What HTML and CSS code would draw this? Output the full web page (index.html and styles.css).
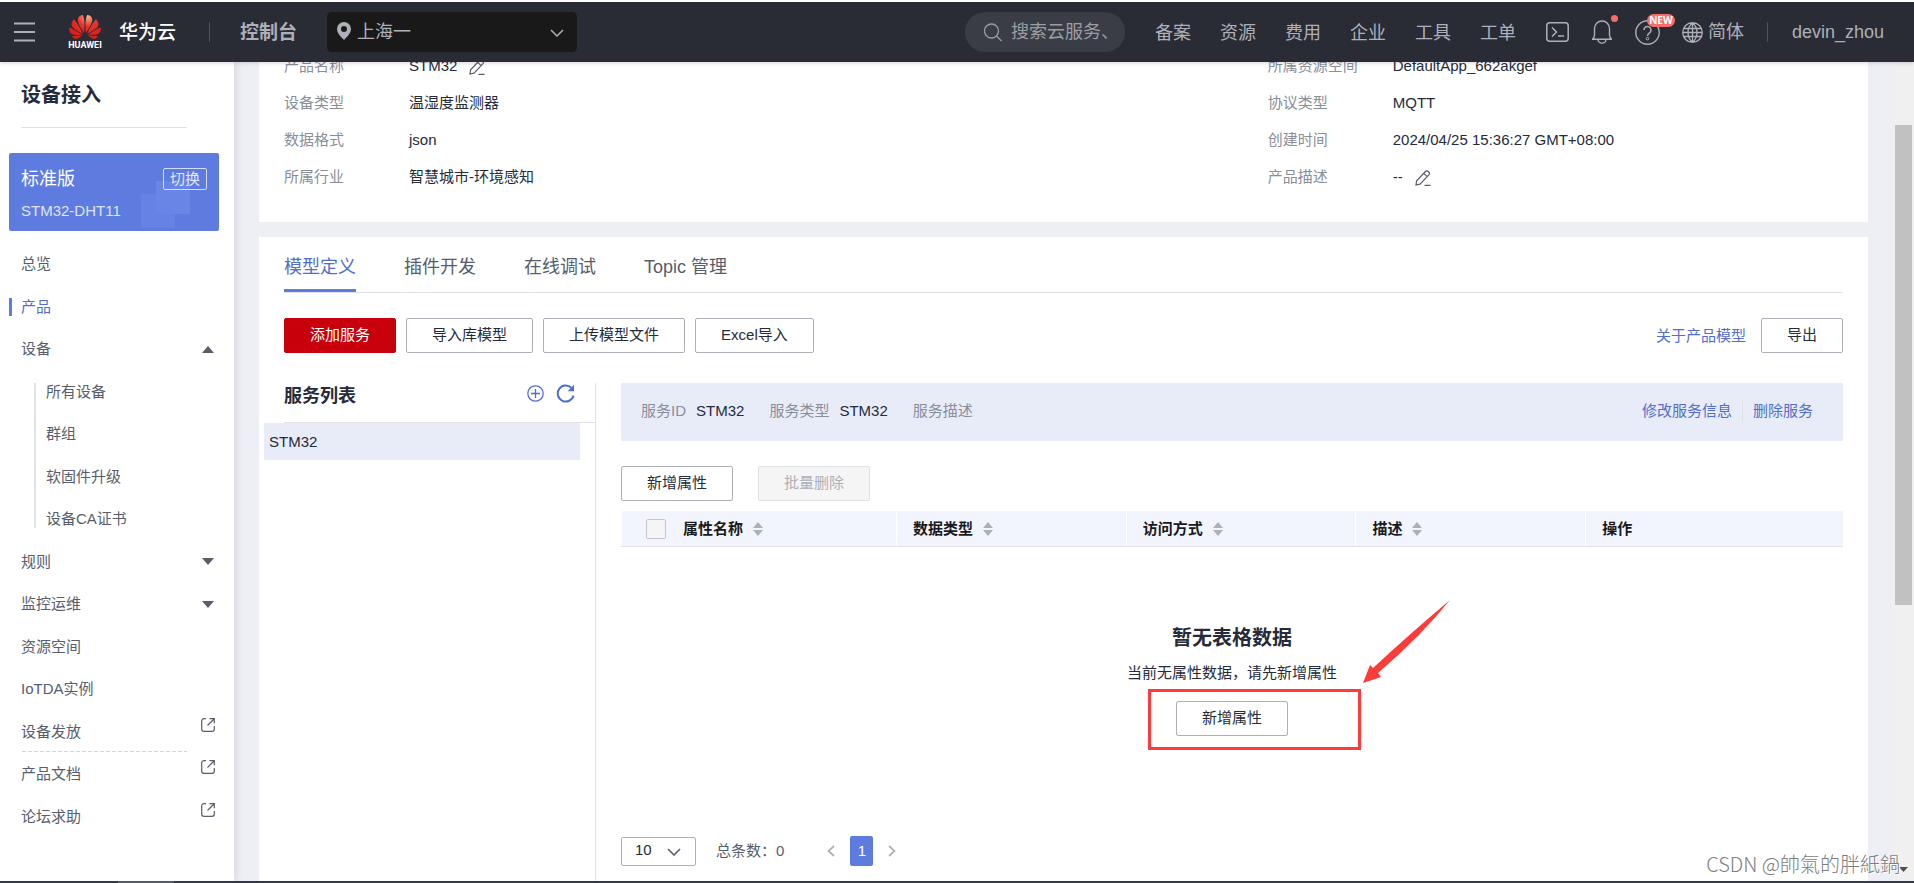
FILE: index.html
```
<!DOCTYPE html>
<html lang="zh-CN">
<head>
<meta charset="utf-8">
<title>设备接入 - 华为云</title>
<link rel="stylesheet" href="styles.css">
</head>
<body>
<svg class="defs" aria-hidden="true">
  <symbol id="pencil" viewBox="0 0 18 18"><path d="M2 16l.6-4.2L11.4 2.5a2 2 0 0 1 2.9 0l.5.5a2 2 0 0 1 0 2.9L6 15.2 2 16zM9.8 4.4l3.3 3.2M10.5 16.3h6" fill="none" stroke="currentColor" stroke-width="1.2"/></symbol>
  <symbol id="ext" viewBox="0 0 14 14"><path d="M5 .7H3A2.3 2.3 0 0 0 .7 3v8A2.3 2.3 0 0 0 3 13.3h8a2.3 2.3 0 0 0 2.3-2.3V8M8.5.7h4.8v4.6M13 1L6.5 7.5" fill="none" stroke="currentColor" stroke-width="1.2"/></symbol>
  <symbol id="sort" viewBox="0 0 10 14"><path d="M5 0l5 6H0zM5 14L0 8h10z" fill="currentColor"/></symbol>
  <symbol id="up" viewBox="0 0 12 7"><path d="M6 0l6 7H0z" fill="currentColor"/></symbol>
  <symbol id="down" viewBox="0 0 12 7"><path d="M6 7L0 0h12z" fill="currentColor"/></symbol>
</svg>

<header class="topbar">
  <button class="icon-btn burger" aria-label="菜单"><svg width="21" height="20" viewBox="0 0 21 20"><path d="M0 1.5h21M0 10h21M0 18.500h21" stroke="currentColor" stroke-width="2"/></svg></button>
  <a class="brand" href="#">
    <span class="brand-mark">
      <svg width="32" height="24" viewBox="0 2.9 24 18.200"><defs><radialGradient id="petal" gradientUnits="userSpaceOnUse" cx="14" cy="4" r="15"><stop offset="0" stop-color="#f9b392"/><stop offset=".5" stop-color="#e8352a"/><stop offset="1" stop-color="#d9201c"/></radialGradient></defs><path fill="url(#petal)" d="M3.67 6.14S1.82 7.91 1.72 9.78v.35c.08 1.51 1.22 2.4 1.22 2.4 1.83 1.79 6.26 4.04 7.3 4.55 0 0 .06.03.1-.01l.02-.04v-.04C7.52 10.8 3.67 6.14 3.67 6.14zM9.65 18.6c-.02-.08-.1-.08-.1-.08l-7.38.26c.8 1.43 2.15 2.53 3.56 2.2.96-.25 3.16-1.78 3.88-2.3.06-.05.04-.09.04-.09zm.08-.78C6.49 15.63.21 12.28.21 12.28c-.15.46-.2.9-.21 1.3v.07c0 1.07.4 1.82.4 1.82.8 1.69 2.34 2.2 2.34 2.2.7.3 1.4.31 1.4.31.12.02 4.4 0 5.54 0 .05 0 .08-.05.08-.05v-.06c0-.03-.03-.05-.03-.05zM9.06 3.19a3.42 3.42 0 00-2.57 3.15v.41c.03.6.16 1.05.16 1.05.66 2.9 3.86 7.65 4.55 8.65.05.05.1.03.1.03a.1.1 0 00.06-.1c1.06-10.6-1.11-13.42-1.11-13.42-.32.02-1.19.23-1.19.23zm8.299 2.27s-.49-1.8-2.44-2.28c0 0-.57-.14-1.17-.22 0 0-2.18 2.81-1.12 13.43.01.07.06.08.06.08.07.03.1-.03.1-.03.72-1.03 3.9-5.76 4.55-8.64 0 0 .36-1.4.02-2.34zm-2.92 13.07s-.07 0-.09.05c0 0-.01.07.03.1.7.51 2.85 2 3.88 2.3 0 0 .16.05.43.06h.14c.69-.02 1.9-.37 3-2.26l-7.4-.25zm7.83-8.41c.14-2.06-1.94-3.97-1.94-3.98 0 0-3.85 4.66-6.67 10.8 0 0-.03.08.02.13l.04.01h.06c1.06-.53 5.46-2.77 7.28-4.54 0 0 1.15-.93 1.21-2.42zm1.52 2.14s-6.28 3.37-9.52 5.55c0 0-.05.04-.03.11 0 0 .03.06.07.06 1.16 0 5.56 0 5.67-.02 0 0 .57-.02 1.27-.29 0 0 1.56-.5 2.37-2.27 0 0 .73-1.45.17-3.14z"/></svg>
      <span class="brand-en">HUAWEI</span>
    </span>
    <span class="brand-name">华为云</span>
  </a>
  <span class="bar-line"></span>
  <a class="console-link" href="#">控制台</a>
  <div class="region">
    <svg class="region-pin" width="14" height="18" viewBox="0 0 14 18"><path fill="currentColor" fill-rule="evenodd" d="M7 0a7 7 0 0 1 7 7c0 4-4 8-7 11-3-3-7-7-7-11a7 7 0 0 1 7-7zm0 4a3 3 0 1 0 0 6 3 3 0 0 0 0-6z"/></svg>
    <select class="region-select" aria-label="区域"><option>上海一</option></select>
    <svg class="region-arrow" width="14" height="8" viewBox="0 0 14 8"><path d="M1 1l6 6 6-6" fill="none" stroke="currentColor" stroke-width="1.500"/></svg>
  </div>
  <label class="search">
    <svg width="18" height="19" viewBox="0 0 18 19"><circle cx="7.500" cy="8" r="7" fill="none" stroke="currentColor" stroke-width="1.300"/><path d="M12.500 13l5 5" stroke="currentColor" stroke-width="1.300"/></svg>
    <input type="text" class="search-input" placeholder="搜索云服务、" aria-label="搜索">
  </label>
  <nav class="topnav">
    <a href="#">备案</a><a href="#">资源</a><a href="#">费用</a><a href="#">企业</a><a href="#">工具</a><a href="#">工单</a>
  </nav>
  <div class="tools">
    <button class="icon-btn" aria-label="命令行"><svg width="23" height="20" viewBox="0 0 23 20"><rect x=".8" y=".8" width="21.400" height="18.400" rx="3" fill="none" stroke="currentColor" stroke-width="1.500"/><path d="M6 5.500l4.500 4.500L6 14.500M12 14h6" fill="none" stroke="currentColor" stroke-width="1.500"/></svg></button>
    <button class="icon-btn" aria-label="消息"><svg width="22" height="24" viewBox="0 0 22 24"><path d="M1 19.200h20M1.500 19q2-1.500 2-4V8.500a7.500 7.500 0 0 1 15 0V15q0 2.500 2 4M7 19.500a4 3.600 0 0 0 8 0" fill="none" stroke="currentColor" stroke-width="1.400"/></svg><span class="dot"></span></button>
    <button class="icon-btn" aria-label="帮助"><svg width="25" height="25" viewBox="0 0 25 25"><circle cx="12.500" cy="12.500" r="11.700" fill="none" stroke="currentColor" stroke-width="1.400"/><path d="M9 10a3.500 3.500 0 1 1 5.500 2.800c-1.300.9-2 1.500-2 3.200" fill="none" stroke="currentColor" stroke-width="1.500"/><circle cx="12.500" cy="18.600" r="1.300" fill="none" stroke="currentColor"/></svg><span class="new">NEW</span></button>
    <button class="icon-btn lang"><svg width="21" height="21" viewBox="0 0 21 21"><path d="M10.500.7a9.800 9.800 0 1 0 0 19.600 9.800 9.800 0 0 0 0-19.600zc-6 5-6 14.600 0 19.600 6-5 6-14.600 0-19.600zv19.600M2 6.500h17M2 14.500h17M.7 10.500h19.600" fill="none" stroke="currentColor" stroke-width="1.300"/></svg>简体</button>
  </div>
  <span class="bar-line"></span>
  <a class="user" href="#">devin_zhou</a>
</header>

<div class="shell">
  <aside class="sidebar">
    <h1 class="side-title">设备接入</h1>
    <div class="edition">
      <div class="edition-row"><span class="edition-name">标准版</span><button class="switch">切换</button></div>
      <span class="edition-id">STM32-DHT11</span>
    </div>
    <ul class="menu">
      <li><a href="#">总览</a></li>
      <li class="active"><a href="#">产品</a></li>
      <li><a href="#">设备<svg width="12" height="7"><use href="#up"/></svg></a></li>
      <li class="sub"><ul>
        <li><a href="#">所有设备</a></li><li><a href="#">群组</a></li><li><a href="#">软固件升级</a></li><li><a href="#">设备CA证书</a></li>
      </ul></li>
      <li><a href="#">规则<svg width="12" height="7"><use href="#down"/></svg></a></li>
      <li><a href="#">监控运维<svg width="12" height="7"><use href="#down"/></svg></a></li>
      <li><a href="#">资源空间</a></li>
      <li><a href="#">IoTDA实例</a></li>
      <li class="outer dashed"><a href="#">设备发放<svg width="14" height="14"><use href="#ext"/></svg></a></li>
      <li class="outer"><a href="#">产品文档<svg width="14" height="14"><use href="#ext"/></svg></a></li>
      <li class="outer"><a href="#">论坛求助<svg width="14" height="14"><use href="#ext"/></svg></a></li>
    </ul>
  </aside>

  <main class="content">
    <section class="card info">
      <dl>
        <div><dt>产品名称</dt><dd>STM32<button class="edit" aria-label="编辑"><svg width="18" height="18"><use href="#pencil"/></svg></button></dd></div>
        <div><dt>所属资源空间</dt><dd>DefaultApp_662akgef</dd></div>
        <div><dt>设备类型</dt><dd>温湿度监测器</dd></div>
        <div><dt>协议类型</dt><dd>MQTT</dd></div>
        <div><dt>数据格式</dt><dd>json</dd></div>
        <div><dt>创建时间</dt><dd>2024/04/25 15:36:27 GMT+08:00</dd></div>
        <div><dt>所属行业</dt><dd>智慧城市-环境感知</dd></div>
        <div><dt>产品描述</dt><dd>--<button class="edit" aria-label="编辑"><svg width="18" height="18"><use href="#pencil"/></svg></button></dd></div>
      </dl>
    </section>

    <section class="card model">
      <nav class="tabs"><a class="on" href="#">模型定义</a><a href="#">插件开发</a><a href="#">在线调试</a><a href="#">Topic 管理</a></nav>
      <div class="toolbar">
        <button class="btn primary">添加服务</button><button class="btn">导入库模型</button><button class="btn">上传模型文件</button><button class="btn">Excel导入</button>
        <a class="link about" href="#">关于产品模型</a><button class="btn">导出</button>
      </div>
      <div class="split">
        <div class="services">
          <div class="services-head">
            <h2>服务列表</h2>
            <button class="icon-btn" aria-label="新增"><svg width="17" height="17" viewBox="0 0 17 17"><path d="M8.500 4v9M4 8.500h9" stroke="currentColor" stroke-width="1.300"/><circle cx="8.500" cy="8.500" r="7.700" fill="none" stroke="currentColor" stroke-width="1.300"/></svg></button>
            <button class="icon-btn" aria-label="刷新"><svg width="19" height="19" viewBox="0 0 19 19"><path d="M17.500 11.500A8 8 0 1 1 15.500 4" fill="none" stroke="currentColor" stroke-width="2"/><path d="M18 .8v6.400h-6.400z" fill="currentColor"/></svg></button>
          </div>
          <a class="service" href="#">STM32</a>
        </div>
        <div class="detail">
          <div class="summary">
            <span class="muted">服务ID</span><span class="val">STM32</span>
            <span class="muted">服务类型</span><span class="val">STM32</span>
            <span class="muted">服务描述</span>
            <div class="summary-links"><a class="link" href="#">修改服务信息</a><a class="link" href="#">删除服务</a></div>
          </div>
          <div class="actions"><button class="btn">新增属性</button><button class="btn" disabled>批量删除</button></div>
          <table class="grid">
            <thead><tr>
              <th class="c-name"><div><input type="checkbox" class="check" aria-label="全选">属性名称<svg width="10" height="14"><use href="#sort"/></svg></div></th>
              <th class="c-mid"><div>数据类型<svg width="10" height="14"><use href="#sort"/></svg></div></th>
              <th class="c-mid"><div>访问方式<svg width="10" height="14"><use href="#sort"/></svg></div></th>
              <th class="c-mid"><div>描述<svg width="10" height="14"><use href="#sort"/></svg></div></th>
              <th><div>操作</div></th>
            </tr></thead>
            <tbody><tr><td colspan="5">
              <h3>暂无表格数据</h3>
              <p>当前无属性数据，请先新增属性</p>
              <div class="marked">
                <button class="btn">新增属性</button>
                <span class="mark-box"></span>
                <svg class="mark-arrow" width="88" height="84" viewBox="0 0 88 84"><path d="M0 83l7-18 3 3Q50 31 87 0 58 36 15 73l3 4z" fill="#fc3c3b"/></svg>
              </div>
            </td></tr></tbody>
          </table>
          <div class="pager">
            <div class="size"><select aria-label="每页条数"><option>10</option></select><svg width="14" height="8" viewBox="0 0 14 8"><path d="M1 1l6 6 6-6" fill="none" stroke="currentColor" stroke-width="1.600"/></svg></div>
            <span class="total">总条数：0</span>
            <button class="icon-btn arrow" aria-label="上一页"><svg width="8" height="12" viewBox="0 0 8 12"><path d="M7 1L1.500 6 7 11" fill="none" stroke="currentColor" stroke-width="1.700"/></svg></button>
            <button class="page">1</button>
            <button class="icon-btn arrow" aria-label="下一页"><svg width="8" height="12" viewBox="0 0 8 12"><path d="M1 1l5.500 5L1 11" fill="none" stroke="currentColor" stroke-width="1.700"/></svg></button>
          </div>
        </div>
      </div>
    </section>
  </main>
  <div class="scroll"><div class="thumb"></div><svg class="scroll-down" width="9" height="5"><path d="M0 0h9L4.500 5z" fill="#505050"/></svg></div>
</div>
<footer class="edge"><span></span></footer>
<div class="watermark">CSDN @帥氣的胖紙鍋</div>
</body>
</html>
```
FILE: styles.css
```
* { box-sizing: border-box; }
body {
  margin: 0;
  min-height: 100vh;
  display: flex;
  flex-direction: column;
  position: relative;
  border-top: 2px solid #fff;
  background: #eeeff5;
  color: #252b3a;
  font: 15px/22px "Liberation Sans", "Noto Sans CJK SC", sans-serif;
}
a { color: inherit; text-decoration: none; }
button, input, select { font: inherit; color: inherit; }
button { cursor: pointer; }
svg { display: block; flex: none; }
ul, dl, dd, h1, h2, h3, p { margin: 0; padding: 0; list-style: none; }
.defs { position: absolute; width: 0; height: 0; }
.icon-btn { display: flex; align-items: center; position: relative; padding: 0; border: 0; background: none; }

/* Top bar */
.topbar {
  position: relative;
  z-index: 2;
  display: flex;
  align-items: center;
  height: 60px;
  padding: 0 30px 0 14px;
  background: #292b35;
  color: #adb0b8;
  font-size: 18px;
  line-height: 26px;
  box-shadow: 0 1px 4px rgba(60, 30, 60, .2);
}
.brand { display: flex; align-items: center; gap: 17px; margin-left: 33px; color: #fff; }
.brand-mark { display: flex; flex-direction: column; align-items: center; width: 34px; padding-top: 1px; }
.brand-en { font: bold 9px/12px Roboto, sans-serif; }
.brand-name { padding-top: 2px; font-size: 19px; font-weight: 500; }
.bar-line { width: 1px; height: 20px; background: #50535d; }
.brand + .bar-line { margin: 0 30px 0 33px; }
.console-link { padding-top: 2px; font-size: 19px; font-weight: bold; }
.region { position: relative; width: 250px; height: 40px; margin-left: 30px; }
.region-select { width: 100%; height: 100%; padding: 0 30px; border: 0; border-radius: 5px; background: #191919; appearance: none; }
.region-pin { position: absolute; left: 10px; top: 10px; }
.region-arrow { position: absolute; right: 13px; top: 17px; }
.search { display: flex; align-items: center; gap: 9px; width: 160px; height: 40px; margin-left: auto; padding-left: 19px; border-radius: 20px; background: #3a3d46; color: #9c9da1; }
.search-input { width: 110px; padding: 0; border: 0; background: none; outline: 0; }
.search-input::placeholder { color: #9c9da1; }
.topnav { display: flex; gap: 29px; margin-left: 30px; padding-top: 2px; }
.tools { display: flex; align-items: center; gap: 22px; margin-left: 30px; }
.lang { gap: 5px; }
.dot { position: absolute; right: -5px; top: -5px; width: 7px; height: 7px; border-radius: 50%; background: #f66f6a; }
.new { position: absolute; left: 12px; top: -6px; width: 28px; border-radius: 7px; background: #f66f6a; color: #fff; font: bold 10px/13px "Open Sans", sans-serif; text-align: center; }
.tools + .bar-line { margin: 0 24px 0 23px; }

/* Side navigation */
.shell { flex: 1; display: flex; }
.sidebar { position: relative; flex: none; display: flex; flex-direction: column; width: 234px; padding-bottom: 43px; background: #fff; box-shadow: 2px 0 8px rgba(40, 50, 80, .12); }
.side-title { margin: 17px 47px 25px 21px; padding-bottom: 16px; border-bottom: 1px solid #dfe1e6; font-size: 20px; line-height: 32px; }
.edition { height: 78px; margin: 0 15px 12px 9px; padding: 14px 12px 0; border-radius: 2px; color: #fff;
  background: linear-gradient(#6985e6, #6985e6) 147px 28px / 34px 33px no-repeat, linear-gradient(#6682e5, #6682e5) 132px 41px / 34px 34px no-repeat, #5e7ce0; }
.edition-row { display: flex; justify-content: space-between; align-items: center; }
.edition-name { font-size: 18px; line-height: 24px; }
.switch { height: 22px; padding: 0 6px; border: 1px solid #d5dcf7; border-radius: 2px; background: none; line-height: 20px; color: #e2e7fb; }
.edition-id { display: block; margin-top: 9px; color: #dfe5f9; }
.menu { flex: 1; display: grid; grid-auto-rows: 1fr; color: #575d6c; }
.menu li { display: grid; padding: 0 20px 0 21px; }
.menu a { display: flex; align-items: center; justify-content: space-between; }
.menu .active { margin-left: 9px; padding-left: 12px; color: #526ecc; background: linear-gradient(#5e7ce0, #5e7ce0) 0 center / 3px 18px no-repeat; }
.menu .sub { grid-row: span 4; padding: 0 0 0 34px; }
.sub ul { display: grid; grid-auto-rows: 1fr; background: linear-gradient(#dfe1e6, #dfe1e6) 0 center / 2px 145px no-repeat; }
.menu .sub li { padding-left: 12px; }
.menu .outer { padding-right: 19px; }
.outer svg { margin-bottom: 14px; }
.dashed { background: repeating-linear-gradient(90deg, #d3d5da 0 4px, transparent 4px 6px) 22px calc(100% - 1px) / 165px 1px no-repeat; }

/* Cards */
.content { flex: 1; display: flex; flex-direction: column; gap: 15px; min-width: 0; padding: 0 26px 0 25px; }
.card { padding: 0 25px; background: #fff; }
.info { margin-top: -15px; padding-bottom: 27px; }
.info dl { display: grid; grid-template-columns: 631fr 369fr; grid-auto-rows: 37px; }
.info dl div { display: flex; align-items: center; }
.info dt { width: 125px; color: #8a8e99; }
.info dd { display: flex; align-items: center; }
.edit { margin-left: 11px; padding: 2px 0 0; border: 0; background: none; color: #575d6c; }
.model { flex: 1; display: flex; flex-direction: column; }
.tabs { display: flex; gap: 48px; height: 56px; border-bottom: 1px solid #dfe1e6; color: #575d6c; font-size: 18px; line-height: 60px; }
.tabs .on { height: 55px; border-bottom: 3px solid #5e7ce0; color: #526ecc; }
.toolbar { display: flex; align-items: center; gap: 10px; margin: 25px 0 30px; }
.btn { height: 35px; padding: 0 25px 2px; border: 1px solid #adb0b8; border-radius: 2px; background: #fff; white-space: nowrap; }
.btn.primary { border-color: #c7000b; background: #c7000b; color: #fff; }
.btn:disabled { border-color: #dfe1e6; background: #f5f5f6; color: #adb0b8; }
.link { color: #526ecc; }
.about { margin: 0 5px 0 auto; }
.split { flex: 1; display: grid; grid-template-columns: 312px 1fr; gap: 25px; }
.services { border-right: 1px solid #dfe1e6; }
.services-head { display: flex; align-items: center; gap: 12px; height: 40px; padding: 0 20px 18px 0; border-bottom: 1px solid #dfe1e6; }
.services-head h2 { flex: 1; padding-top: 4px; font-size: 18px; }
.services-head .icon-btn { color: #526ecc; }
.service { display: block; margin: 0 15px 0 -20px; padding-left: 5px; background: #e8ecf9; line-height: 37px; }
.summary { display: flex; align-items: center; height: 58px; padding: 0 30px 2px 20px; background: #e8ecf9; }
.muted { color: #8a8e99; }
.val { margin: 0 25px 0 10px; }
.summary-links { display: flex; margin-left: auto; }
.summary-links .link + .link { margin-left: 10px; padding-left: 10px; border-left: 1px solid #dfe1e6; }
.actions { display: flex; gap: 25px; margin: 25px 0 10px; }
.grid { width: 100%; table-layout: fixed; border-collapse: separate; border-spacing: 0; }
.grid th { height: 36px; padding: 0; background: #f2f5fd; border-bottom: 1px solid #dfe1e6; }
.grid th div { display: flex; align-items: center; height: 35px; padding-left: 16px; border-left: 1px solid #fff; color: #181a20; }
.grid th:first-child div { padding-left: 24px; }
.grid th svg { margin-left: 10px; color: #adb0b8; }
.c-name { width: 22.5%; }
.c-mid { width: 18.8%; }
.check { appearance: none; width: 20px; height: 20px; margin: 0 17px 0 0; border: 1px solid #c3c5cb; border-radius: 2px; background: #f5f5f6; }
.grid td { padding: 76px 0 0; text-align: center; }
.grid h3 { font-size: 20px; line-height: 30px; }
.grid p { margin: 9px 0 17px; }
.marked { position: relative; width: 112px; margin: 0 auto; }
.mark-box { position: absolute; left: -28px; top: -12px; width: 213px; height: 61px; border: 3px solid #fc3c3b; }
.mark-arrow { position: absolute; left: 187px; top: -101px; }

/* Pager */
.pager { display: flex; align-items: center; margin: 100px 0 15px; color: #575d6c; }
.size { position: relative; width: 75px; height: 29px; }
.size select { width: 100%; height: 100%; padding: 0 13px 2px; border: 1px solid #adb0b8; border-radius: 2px; background: #fff; color: #252b3a; appearance: none; }
.size svg { position: absolute; right: 15px; top: 11px; }
.total { margin: 0 43px 0 20px; }
.arrow { color: #adb0b8; }
.page { width: 23px; height: 30px; margin: 0 15px; padding: 0; border: 0; border-radius: 2px; background: #5e7ce0; color: #fff; }

/* Window edges */
.scroll { position: relative; flex: none; width: 20px; padding: 63px 2px 0 1px; background: #f0f0f0; }
.thumb { height: 63.5%; background: #c1c1c1; }
.scroll-down { position: absolute; left: 5px; bottom: 9px; }
.edge { height: 2px; padding-left: 118px; background: #35384a; }
.edge span { display: block; width: 56px; height: 2px; background: #5c5f6e; }
.watermark { position: absolute; right: 14px; bottom: 5px; color: #7c7d81; font: 300 20px/28px "Noto Sans CJK TC", sans-serif; text-shadow: 1px 1px 0 #fff; }
```
